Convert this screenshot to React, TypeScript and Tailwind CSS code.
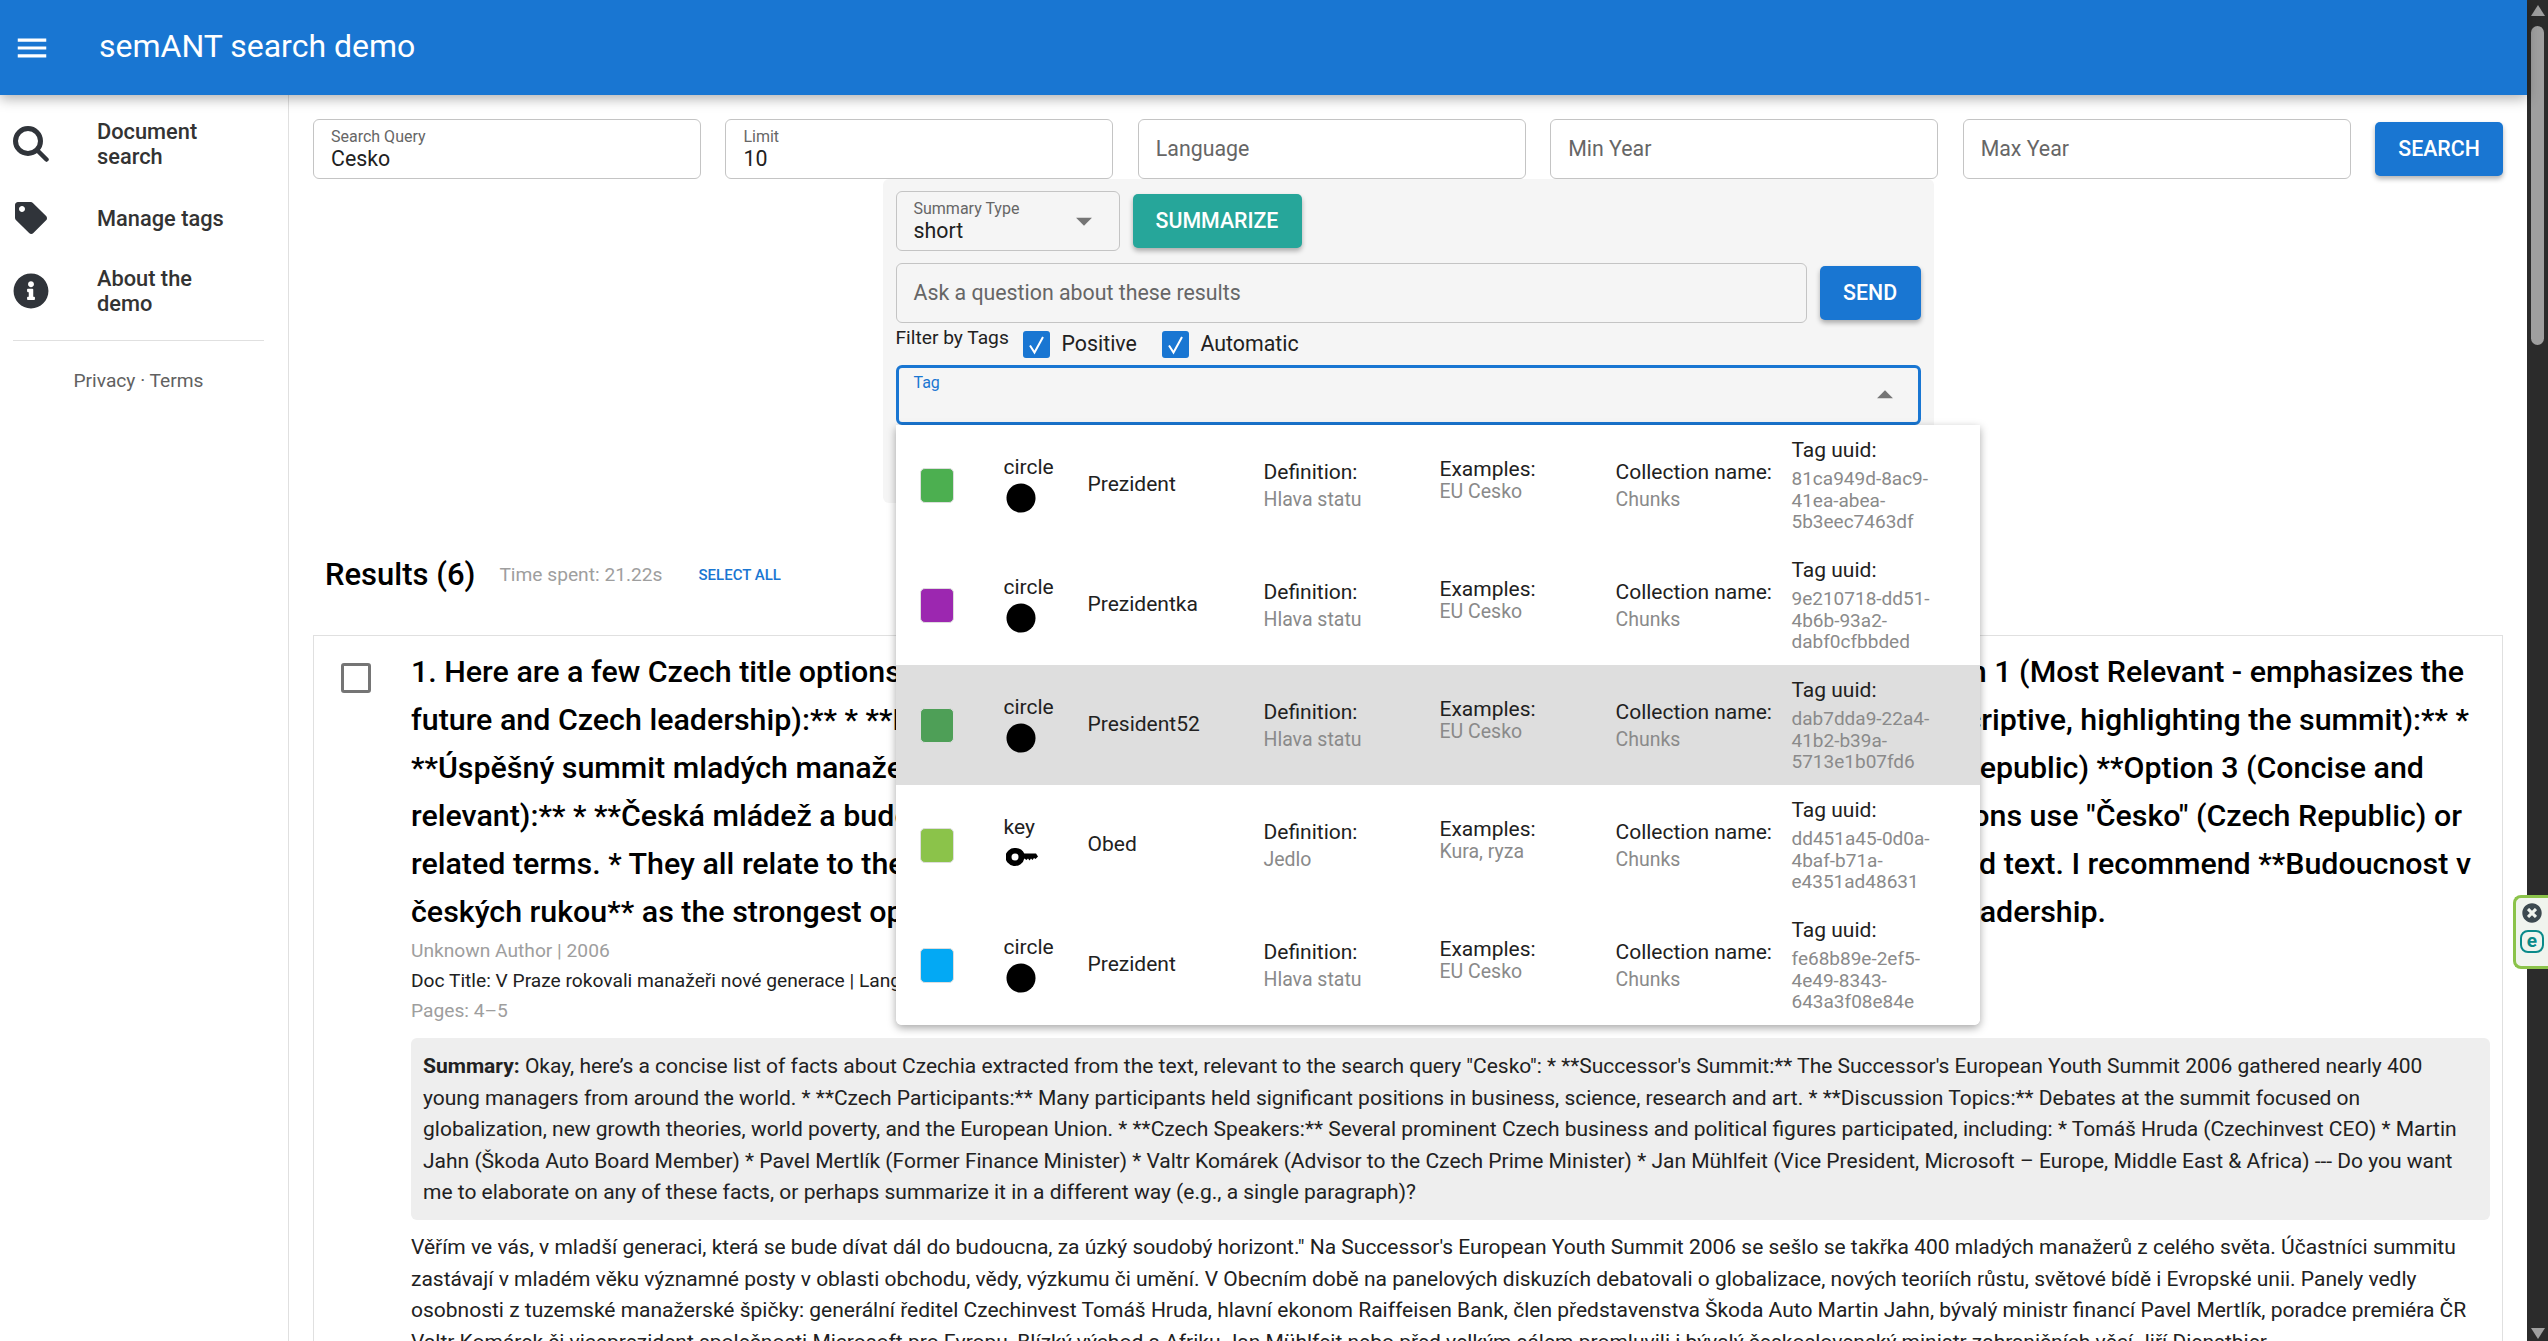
import { FaCircle, FaInfoCircle, FaTag, FaTimesCircle } from "react-icons/fa";

const tags = [
  { color: "bg-[#4caf50]", shape: "circle", name: "Prezident", definition: "Hlava statu", examples: "EU Cesko", uuid: ["81ca949d-8ac9-", "41ea-abea-", "5b3eec7463df"] },
  { color: "bg-[#9c27b0]", shape: "circle", name: "Prezidentka", definition: "Hlava statu", examples: "EU Cesko", uuid: ["9e210718-dd51-", "4b6b-93a2-", "dabf0cfbbded"] },
  { color: "bg-[#4e9f57]", shape: "circle", name: "President52", definition: "Hlava statu", examples: "EU Cesko", uuid: ["dab7dda9-22a4-", "41b2-b39a-", "5713e1b07fd6"], active: true },
  { color: "bg-[#8bc34a]", shape: "key", name: "Obed", definition: "Jedlo", examples: "Kura, ryza", uuid: ["dd451a45-0d0a-", "4baf-b71a-", "e4351ad48631"] },
  { color: "bg-[#03a9f4]", shape: "circle", name: "Prezident", definition: "Hlava statu", examples: "EU Cesko", uuid: ["fe68b89e-2ef5-", "4e49-8343-", "643a3f08e84e"] },
];

// the dropdown hides the middle of each line, so the right part is placed on its own
const titleLines = [
  { left: "1. Here are a few Czech title options, based on the provided text:", right: "**Option 1 (Most Relevant - emphasizes the", end: "mr-[26px]" },
  { left: "future and Czech leadership):** * **Budoucnost v českých rukou** **Option 2", right: "(More descriptive, highlighting the summit):** *", end: "mr-[21px]" },
  { left: "**Úspěšný summit mladých manažerů v Praze**", right: "(Successful summit in the Czech Republic) **Option 3 (Concise and", end: "mr-[66px]" },
  { left: "relevant):** * **Česká mládež a budoucnost**", right: "All options use \"Česko\" (Czech Republic) or", end: "mr-[28px]" },
  { left: "related terms. * They all relate to the theme of the", right: "provided text. I recommend **Budoucnost v", end: "mr-[19px]" },
  { left: "českých rukou** as the strongest option", right: "leadership.", end: "mr-[384px]" },
];

function MenuIcon() {
  return (
    <svg viewBox="0 0 24 24" className="w-[38px] h-[38px] fill-white">
      <path d="M3 18h18v-2H3v2zm0-5h18v-2H3v2zm0-7v2h18V6H3z" />
    </svg>
  );
}

function SearchIcon() {
  return (
    <svg viewBox="0 0 36 36" className="w-[36px] h-[36px] fill-none stroke-[#30343a]">
      <circle cx="15" cy="15" r="12.500" strokeWidth="5" />
      <path d="M24 24l9.500 9.500" strokeWidth="4.500" strokeLinecap="round" />
    </svg>
  );
}

function Arrow({ up }: { up?: boolean }) {
  return (
    <svg viewBox="0 0 24 24" className="w-[38px] h-[38px] fill-[#757575]">
      <path d={up ? "M7 14l5-5 5 5z" : "M7 10l5 5 5-5z"} />
    </svg>
  );
}

function KeyIcon() {
  return (
    <svg viewBox="0 0 32 18" className="w-[32px] h-[18px] fill-black">
      <path fillRule="evenodd" d="M9.500 0a9.500 9 0 0 1 8.800 5.500H30l2 3-2.500 2.500-1.500-1-1.500 2-1.500-1.500-1.500 2-1.500-2-1.500 1.500-2.200-1.500A9.500 9 0 1 1 9.500 0zM9 5.500a3.500 3.500 0 1 0 0 7 3.500 3.500 0 0 0 0-7z" />
    </svg>
  );
}

function Field({ label, value, placeholder }: { label?: string; value?: string; placeholder?: string }) {
  return (
    <div className="flex-1 h-[60px] border border-[#c4c4c4] rounded-[6px] px-[17px] flex flex-col justify-center min-w-0">
      {label && <div className="text-[16px] leading-[19px] text-[#666]">{label}</div>}
      {value && <div className="text-[21.330px] leading-[25px] text-[#212121]">{value}</div>}
      {placeholder && <div className="text-[21.330px] text-[#666]">{placeholder}</div>}
    </div>
  );
}

function CheckBox() {
  return (
    <div className="w-[27px] h-[27px] rounded-[3px] bg-[#1976d2] flex items-center justify-center shrink-0">
      <svg viewBox="0 0 27 27" className="w-[27px] h-[27px] fill-none stroke-white stroke-[2]">
        <path d="M7 14.500l4.500 7L20 6" />
      </svg>
    </div>
  );
}

function TagRow({ tag }: { tag: (typeof tags)[number] }) {
  return (
    <div className={`h-[120px] grid grid-cols-[108px_84px_176px_176px_176px_176px_1fr] items-center text-[21px] text-[#212121] ${tag.active ? "bg-[#dedede]" : "bg-white"}`}>
      <div className="pl-[24px]">
        <div className={`w-[34px] h-[35px] rounded-[5px] border border-[#dddddd] ${tag.color}`} />
      </div>
      <div className="flex flex-col pb-[3px]">
        <div className="text-[21px] leading-[26px]">{tag.shape}</div>
        <div className="h-[33px] flex items-end pl-[2px]">
          {tag.shape === "key" ? <div className="mb-[7px]"><KeyIcon /></div> : <FaCircle className="w-[30px] h-[30px] text-black" />}
        </div>
      </div>
      <div>{tag.name}</div>
      <div className="pt-[2px]">
        <div className="leading-[28px]">Definition:</div>
        <div className="text-[19.500px] leading-[28px] text-[#8a8a8a]">{tag.definition}</div>
      </div>
      <div className="pb-[11px]">
        <div className="leading-[24px]">Examples:</div>
        <div className="text-[19.500px] leading-[22px] text-[#8a8a8a]">{tag.examples}</div>
      </div>
      <div className="pt-[2px]">
        <div className="leading-[28px] whitespace-nowrap">Collection name:</div>
        <div className="text-[19.500px] leading-[28px] text-[#8a8a8a]">Chunks</div>
      </div>
      <div className="pb-[2px]">
        <div className="leading-[30px]">Tag uuid:</div>
        <div className="mt-[3px] text-[19px] leading-[21.500px] text-[#8a8a8a]">
          {tag.uuid.map((part) => (
            <div key={part}>{part}</div>
          ))}
        </div>
      </div>
    </div>
  );
}

export default function App() {
  return (
    <div className="relative flex h-[1341px] overflow-hidden bg-white font-['Roboto',sans-serif]">
      <div className="flex flex-col w-[2527px] shrink-0">
        <header className="relative z-20 h-[95px] shrink-0 bg-[#1976d2] flex items-center pl-[13px] shadow-[0_4px_12px_rgba(0,0,0,0.3)]">
          <MenuIcon />
          <h1 className="ml-[48px] pb-[3px] text-[32px] font-normal text-white">semANT search demo</h1>
        </header>

        <div className="flex flex-1 min-h-0">
          <aside className="w-[289px] shrink-0 border-r border-[#e0e0e0] text-[#333] pt-[24px]">
            <nav className="font-medium text-[21.800px] leading-[25px]">
              <div className="flex items-center h-[50px] pl-[13px]">
                <SearchIcon />
                <span className="ml-[48px] w-[150px]">Document search</span>
              </div>
              <div className="flex items-center h-[50px] mt-[24px] pl-[15px]">
                <FaTag className="w-[32px] h-[32px] text-[#30343a]" />
                <span className="ml-[50px]">Manage tags</span>
              </div>
              <div className="flex items-center h-[52px] mt-[22px] pl-[13px]">
                <FaInfoCircle className="w-[36px] h-[36px] text-[#30343a]" />
                <span className="ml-[48px] w-[130px]">About the demo</span>
              </div>
            </nav>
            <div className="mt-[23px] mx-[13px] w-[251px] border-t border-[#e0e0e0]" />
            <div className="mt-[28px] text-center text-[19.200px] leading-[24px] text-[#616161] w-[277px]">Privacy · Terms</div>
          </aside>

          <main className="flex-1 min-w-0 px-[24px] pt-[24px]">
            <div className="flex items-center gap-[24.500px]">
              <Field label="Search Query" value="Cesko" />
              <Field label="Limit" value="10" />
              <Field placeholder="Language" />
              <Field placeholder="Min Year" />
              <Field placeholder="Max Year" />
              <button className="w-[128px] h-[54px] shrink-0 rounded-[5px] bg-[#1976d2] text-white text-[21.330px] font-medium shadow-[0_3px_5px_rgba(0,0,0,0.3)]">SEARCH</button>
            </div>

            <div className="relative z-10 w-[1051px] mx-auto h-[324px] bg-[#f5f5f5] rounded-[6px] px-[13px] pt-[12px]">
              <div className="flex items-center gap-[13px] h-[60px]">
                <div className="relative w-[224px] h-[60px] border border-[#c4c4c4] rounded-[6px] pl-[17px] flex flex-col justify-center">
                  <div className="text-[16px] leading-[19px] text-[#666]">Summary Type</div>
                  <div className="text-[21.330px] leading-[25px] text-[#212121]">short</div>
                  <div className="absolute right-[16px] top-[10px]"><Arrow /></div>
                </div>
                <button className="w-[169px] h-[54px] rounded-[5px] bg-[#26a69a] text-white text-[21.330px] font-medium shadow-[0_3px_5px_rgba(0,0,0,0.3)]">SUMMARIZE</button>
              </div>

              <div className="flex items-center gap-[13px] h-[60px] mt-[12px]">
                <div className="w-[912px] h-[60px] border border-[#c4c4c4] rounded-[6px] pl-[17px] flex items-center text-[21.330px] text-[#666]">Ask a question about these results</div>
                <button className="w-[101px] h-[54px] rounded-[5px] bg-[#1976d2] text-white text-[21.330px] font-medium shadow-[0_3px_5px_rgba(0,0,0,0.3)]">SEND</button>
              </div>

              <div className="flex h-[42px] pt-[8px] text-[21.330px] text-[#212121]">
                <div className="w-[127px] text-[19.200px] leading-[14px] text-[#212121]">Filter by Tags</div>
                <CheckBox />
                <span className="ml-[12px] w-[100px] leading-[26px]">Positive</span>
                <CheckBox />
                <span className="ml-[12px] leading-[26px]">Automatic</span>
              </div>

              <div className="relative h-[60px] w-[1025px] border-[3px] border-[#1976d2] rounded-[6px] pl-[15px]">
                <div className="text-[16px] leading-[30px] text-[#1976d2]">Tag</div>
                <div className="absolute right-[14px] top-[8px]"><Arrow up /></div>
              </div>

              <div className="absolute left-[13px] top-[246px] w-[1084px] rounded-b-[6px] overflow-hidden bg-white shadow-[0_3px_8px_rgba(0,0,0,0.35)]">
                {tags.map((tag) => (
                  <TagRow key={tag.uuid[0]} tag={tag} />
                ))}
              </div>
            </div>

            <div className="flex items-center h-[50px] mt-[47px] pl-[12px]">
              <h2 className="text-[31px] font-medium text-black">Results (6)</h2>
              <span className="ml-[24px] text-[19.200px] text-[#9e9e9e]">Time spent: 21.22s</span>
              <span className="ml-[36px] text-[15px] font-medium text-[#1976d2]">SELECT ALL</span>
            </div>

            <article className="mt-[35px] border border-[#e0e0e0] flex pt-[12px] pr-[12px]">
              <div className="w-[97px] pl-[27px] pt-[15px] shrink-0">
                <div className="w-[30px] h-[30px] border-[3px] border-[#757575] rounded-[3px]" />
              </div>
              <div className="flex-1 min-w-0">
                <div className="text-[30.400px] font-medium leading-[48px] text-black">
                  {titleLines.map((line) => (
                    <div key={line.left} className="flex whitespace-nowrap">
                      <div className="flex-1 min-w-0 overflow-hidden">{line.left}</div>
                      <div className={`shrink-0 ${line.end}`}>{line.right}</div>
                    </div>
                  ))}
                </div>
                <div className="text-[19.200px] leading-[30px] text-[#9e9e9e]">Unknown Author | 2006</div>
                <div className="text-[19.200px] leading-[30px] text-[#212121]">Doc Title: V Praze rokovali manažeři nové generace | Language: cs</div>
                <div className="text-[19.200px] leading-[30px] text-[#9e9e9e]">Pages: 4–5</div>

                <div className="mt-[12px] h-[182px] bg-[#eeeeee] rounded-[6px] px-[12px] pt-[13px] text-[21px] leading-[31.500px] text-[#212121]">
                  <b className="font-bold">Summary:</b> Okay, here’s a concise list of facts about Czechia extracted from the text, relevant to the search query "Cesko": * **Successor's Summit:** The Successor's European Youth Summit 2006 gathered nearly 400 young managers from around the world. * **Czech Participants:** Many participants held significant positions in business, science, research and art. * **Discussion Topics:** Debates at the summit focused on globalization, new growth theories, world poverty, and the European Union. * **Czech Speakers:** Several prominent Czech business and political figures participated, including: * Tomáš Hruda (Czechinvest CEO) * Martin Jahn (Škoda Auto Board Member) * Pavel Mertlík (Former Finance Minister) * Valtr Komárek (Advisor to the Czech Prime Minister) * Jan Mühlfeit (Vice President, Microsoft – Europe, Middle East &amp; Africa) --- Do you want me to elaborate on any of these facts, or perhaps summarize it in a different way (e.g., a single paragraph)?
                </div>

                <p className="mt-[12px] pr-[20px] text-[21px] leading-[31.500px] text-[#212121]">
                  Věřím ve vás, v mladší generaci, která se bude dívat dál do budoucna, za úzký soudobý horizont." Na Successor's European Youth Summit 2006 se sešlo se takřka 400 mladých manažerů z celého světa. Účastníci summitu zastávají v mladém věku významné posty v oblasti obchodu, vědy, výzkumu či umění. V Obecním době na panelových diskuzích debatovali o globalizace, nových teoriích růstu, světové bídě i Evropské unii. Panely vedly osobnosti z tuzemské manažerské špičky: generální ředitel Czechinvest Tomáš Hruda, hlavní ekonom Raiffeisen Bank, člen představenstva Škoda Auto Martin Jahn, bývalý ministr financí Pavel Mertlík, poradce premiéra ČR Valtr Komárek či viceprezident společnosti Microsoft pro Evropu, Blízký východ a Afriku Jan Mühlfeit nebo před velkým sálem promluvili i bývalý československý ministr zahraničních věcí Jiří Dienstbier
                </p>
              </div>
            </article>
          </main>
        </div>
      </div>

      {/* scrollbar */}
      <div className="w-[21px] shrink-0 bg-[#2b2b2b] flex flex-col items-center relative">
        <svg viewBox="0 0 14 12" className="mt-[5px] w-[14px] h-[12px] fill-[#9f9f9f]"><path d="M7 0l7 11H0z" /></svg>
        <div className="mt-[9px] w-[13px] h-[319px] rounded-full bg-[#9f9f9f]" />
        <svg viewBox="0 0 14 12" className="mt-auto mb-[1px] w-[14px] h-[12px] fill-[#9f9f9f]"><path d="M0 0h14L7 11z" /></svg>
      </div>

      {/* browser extension badge */}
      <div className="absolute z-30 right-0 top-[895px] w-[35px] h-[74px] bg-[#f0f4ee] border-[3px] border-r-0 border-[#8bc34a] rounded-l-[8px] flex flex-col items-center pt-[5px] gap-[7px]">
        <FaTimesCircle className="w-[20px] h-[20px] text-[#3d4a50]" />
        <div className="w-[24px] h-[23px] rounded-[8px] border-[2.500px] border-[#0a8a8a] text-[#0a8a8a] text-[19px] leading-[17px] font-bold text-center">e</div>
      </div>
    </div>
  );
}
